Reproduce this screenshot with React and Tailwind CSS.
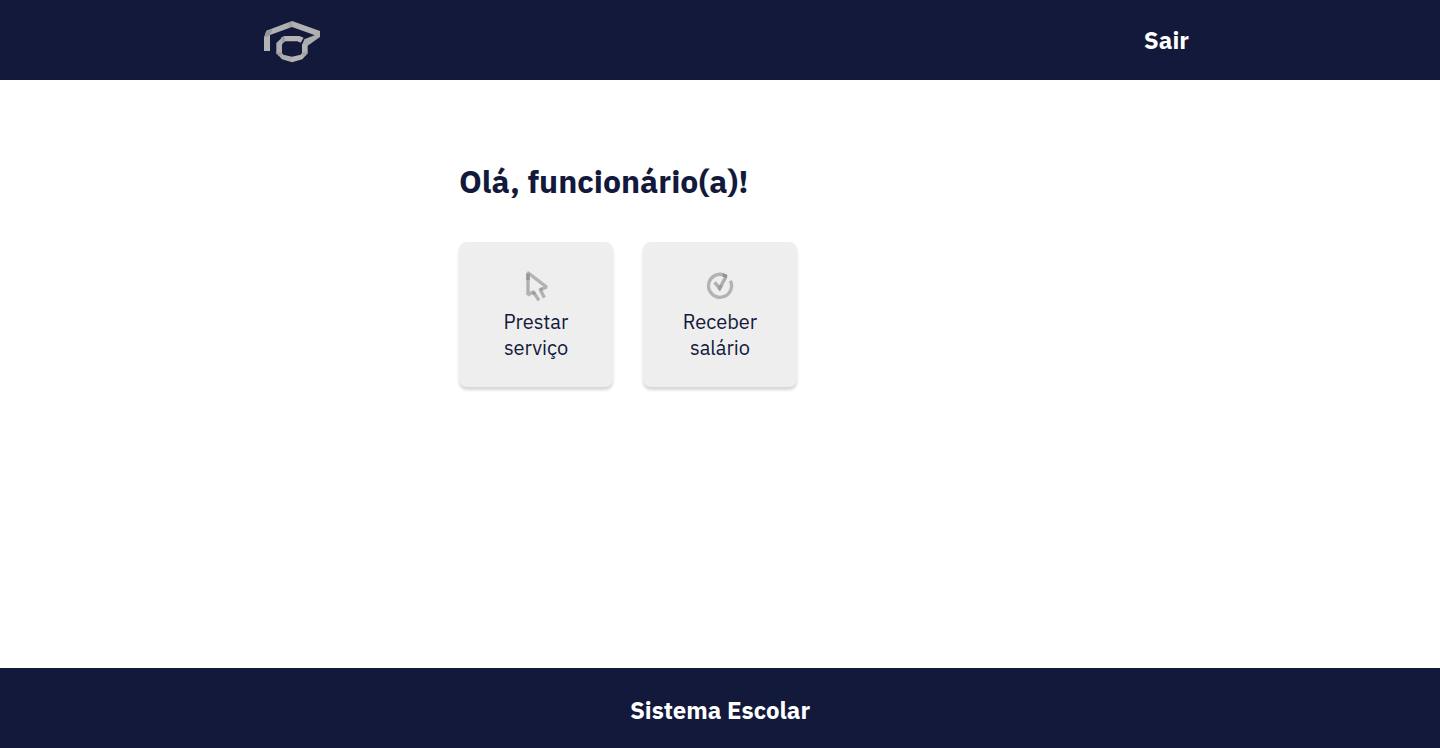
const font = "font-['IBM_Plex_Sans',Roboto,sans-serif]";

function Logo() {
  return (
    <svg viewBox="24 24 168 129" className="h-[43px] w-14" role="img" aria-label="Sistema Escolar">
      <defs>
        <linearGradient id="fold" x1="0" x2="1" y1="0" y2="0">
          <stop offset="0" stopColor="#b4b4b4" />
          <stop offset="0.8" stopColor="#b0b0b0" />
          <stop offset="1" stopColor="#9c9c9c" />
        </linearGradient>
      </defs>
      <path d="M24 74 42 67V117H24Z" fill="#b3b3b3" />
      <path d="M31 56 108 27V45L42 69 24 77Z" fill="url(#fold)" />
      <path d="M24 77 31 57 50 52 42 69Z" fill="#989898" />
      <path d="M108 27 192 57V75L108 45Z" fill="#b1b1b1" />
      <path d="M192 59V75L155 101 138 99 145 82 177 69Z" fill="#acacac" />
      <path d="M61 93 80 75 81 91 78 99V123L61 127Z" fill="#aeaeae" />
      <path d="M76 76 86 72H130L143 77 134 92 124 88H88L78 95Z" fill="#b5b5b5" />
      <path d="M76 78 86 74V88L79 94Z" fill="#9c9c9c" />
      <path d="M138 97 155 98V125L138 123Z" fill="#b3b3b3" />
      <path d="M61 123H78L82 128 108 134V151L78 142Z" fill="#adadad" />
      <path d="M138 123 155 124 139 142 108 151V134L134 128Z" fill="#b4b4b4" />
      <path d="M61 121H78L77 130 68 133Z" fill="#9c9c9c" />
      <path d="M138 121H155L149 132 137 129Z" fill="#a2a2a2" />
    </svg>
  );
}

function CursorIcon() {
  return (
    <svg viewBox="0 0 120 132" className="h-11 w-10" fill="none" strokeWidth="10" aria-hidden="true">
      <path d="M36 27V93" stroke="#b0b0b0" />
      <path d="M37 27 90 68" stroke="#b4b4b4" strokeLinecap="round" />
      <path d="M92 69 73 77 85 101" stroke="#b2b2b2" strokeLinejoin="round" />
      <path d="M34 93 52 84 69 109" stroke="#b2b2b2" strokeLinejoin="round" />
      <path d="M36 29V48" stroke="#959595" />
      <path d="M50 85 57 91M73 77 79 74" stroke="#9c9c9c" />
    </svg>
  );
}

function CheckIcon() {
  return (
    <svg viewBox="0 0 120 132" className="h-11 w-10" fill="none" strokeWidth="10" aria-hidden="true">
      <path d="M79 36.500A34.500 34.500 0 1 0 91 50" stroke="#b3b3b3" />
      <path d="M44 55 59 73 78 38" stroke="#aeaeae" />
      <path d="M56 69.500 59 73 64 64" stroke="#9c9c9c" />
      <path d="M68 33 81 38" stroke="#909090" strokeWidth="9" />
    </svg>
  );
}

function Card({ icon, children }) {
  return (
    <button
      type="button"
      className="flex cursor-pointer flex-col items-center rounded-lg bg-[#eeeeee] px-8 pt-[22px] pb-[26px] text-xl leading-[26px] text-[#13193a] shadow-[0_3px_3px_rgba(0,0,0,0.16)]"
    >
      {icon}
      <span className="pt-px">{children}</span>
    </button>
  );
}

export default function App() {
  return (
    <div className={`flex min-h-screen flex-col bg-white text-[#13193a] antialiased ${font}`}>
      <header className="bg-[#13193a]">
        <div className="mx-auto flex h-20 max-w-[940px] items-center justify-between pr-px pl-3.5">
          <a href="#inicio" className="pt-0.5">
            <Logo />
          </a>
          <a href="#sair" className="text-2xl font-bold text-white">
            Sair
          </a>
        </div>
      </header>
      <main className="mx-auto w-full max-w-[522px] flex-1 pt-20">
        <h1 className="text-[32px] leading-[42px] font-bold">Olá, funcionário(a)!</h1>
        <div className="mt-10 grid grid-cols-3 gap-[30px]">
          <Card icon={<CursorIcon />}>
            <span className="block">Prestar serviço</span>
          </Card>
          <Card icon={<CheckIcon />}>
            <span className="block">Receber salário</span>
          </Card>
        </div>
      </main>
      <footer className="flex h-20 items-center justify-center bg-[#13193a] pt-1 text-2xl font-bold text-white">
        Sistema Escolar
      </footer>
    </div>
  );
}
